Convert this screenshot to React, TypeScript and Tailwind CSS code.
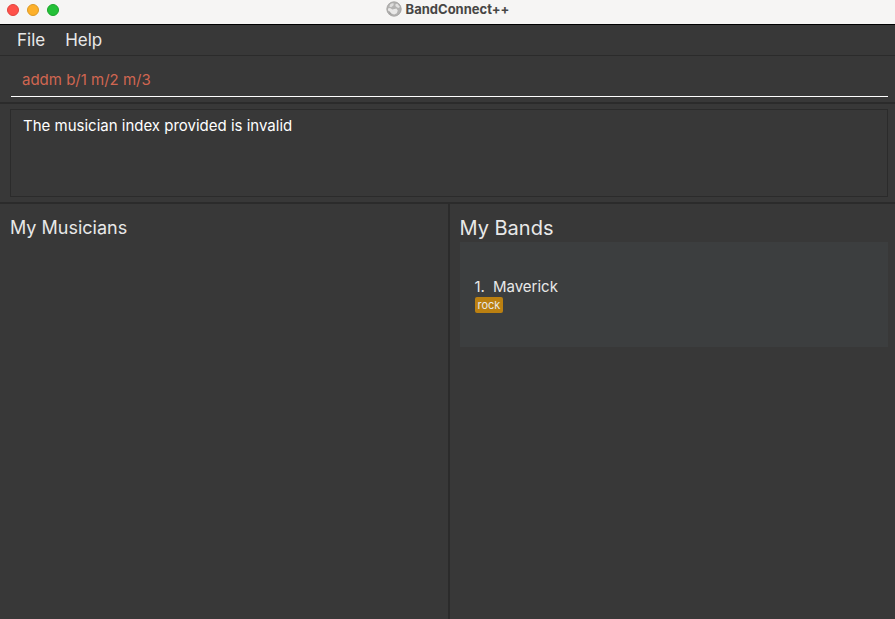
import React, { useState } from "react";

type Band = { name: string; genres: string[] };

const bands: Band[] = [{ name: "Maverick", genres: ["rock"] }];

function GlobeIcon() {
  return (
    <svg viewBox="0 0 16 16" className="size-4" aria-hidden="true">
      <circle cx="8" cy="8" r="7.5" fill="#b3b2b1" />
      <path d="M4 3.6 6 2.2l1.8.4-.4 2L5.2 6.2 3.4 5.8z" fill="#dedddc" />
      <path d="M9.6 3 11.4 2.8l2 2.4-.2 1.8-2-.4-1.8-1.6z" fill="#e2e1e0" />
      <path d="M2 7.4 4 7l2.4 1.4 4-.8 1.4 1.8-1 2.8-2.6 1.2-2.8-.8-1.8-2.4L2 9.6z" fill="#e9e8e7" />
      <path d="M2.4 10.6 4.4 12l1.6 1.8-1.2-.2A7 7 0 0 1 2.4 10.6z" fill="#9c9b9a" />
      <circle cx="8" cy="8" r="7.1" fill="none" stroke="#a9a8a7" strokeWidth="0.8" />
    </svg>
  );
}

function TitleBar() {
  return (
    <header className="grid h-6 grid-cols-[1fr_auto_1fr] items-start bg-[#f6f5f4]">
      <div className="flex gap-2 pt-1 pl-[7px]">
        <button aria-label="Close" className="size-3 rounded-full border border-[#e0443e] bg-[#ff5149]" />
        <button aria-label="Minimize" className="size-3 rounded-full border border-[#dc9a25] bg-[#fdb02a]" />
        <button aria-label="Zoom" className="size-3 rounded-full border border-[#1ba52c] bg-[#24c138]" />
      </div>
      <div className="flex items-center gap-1 pt-px">
        <GlobeIcon />
        <h1 className="text-[13px] leading-4 font-bold text-[#474645]">BandConnect++</h1>
      </div>
    </header>
  );
}

export default function App() {
  const [command, setCommand] = useState("addm b/1 m/2 m/3");
  return (
    <div className="flex min-h-screen flex-col bg-[#383838] font-['Inter',sans-serif] text-[#e8e8e8]">
      <TitleBar />
      <nav className="flex h-8 items-center gap-5 border-t border-b border-t-black border-b-[#2b2b2b] px-[17px] text-[17px] leading-6">
        <button>File</button>
        <button>Help</button>
      </nav>
      <section className="border-b-2 border-[#2b2b2b] pt-2 pr-[7px] pb-[5px] pl-[11px]">
        <input
          aria-label="Command"
          value={command}
          onChange={(e) => setCommand(e.target.value)}
          className="block h-[33px] w-full border-b border-white bg-transparent px-[11px] pb-0.5 text-[15px] text-[#d06651] outline-none"
        />
      </section>
      <section className="border-b-2 border-[#2b2b2b] pt-[5px] pr-[7px] pb-[5px] pl-[10px]">
        <output className="block h-22 border border-[#2b2b2b] px-3 py-1 text-[15px] leading-6 text-white">
          The musician index provided is invalid
        </output>
      </section>
      <main className="grid flex-1 grid-cols-2">
        <section className="px-[10px] pt-[10px]">
          <h2 className="text-lg leading-7">My Musicians</h2>
        </section>
        <section className="border-l-2 border-[#2b2b2b] pt-[10px] pr-[7px] pl-[10px]">
          <h2 className="text-xl leading-7">My Bands</h2>
          <ol>
            {bands.map((band, i) => (
              <li key={band.name} className="h-[105px] bg-[#3c3e3f] px-[15px] pt-[35px]">
                <div className="flex gap-2 text-[15px] leading-5">
                  <span>{i + 1}.</span>
                  <span>{band.name}</span>
                </div>
                <div className="flex gap-1">
                  {band.genres.map((g) => (
                    <span key={g} className="rounded-xs bg-[#bb8011] px-[3px] text-[11px] leading-4">
                      {g}
                    </span>
                  ))}
                </div>
              </li>
            ))}
          </ol>
        </section>
      </main>
    </div>
  );
}
